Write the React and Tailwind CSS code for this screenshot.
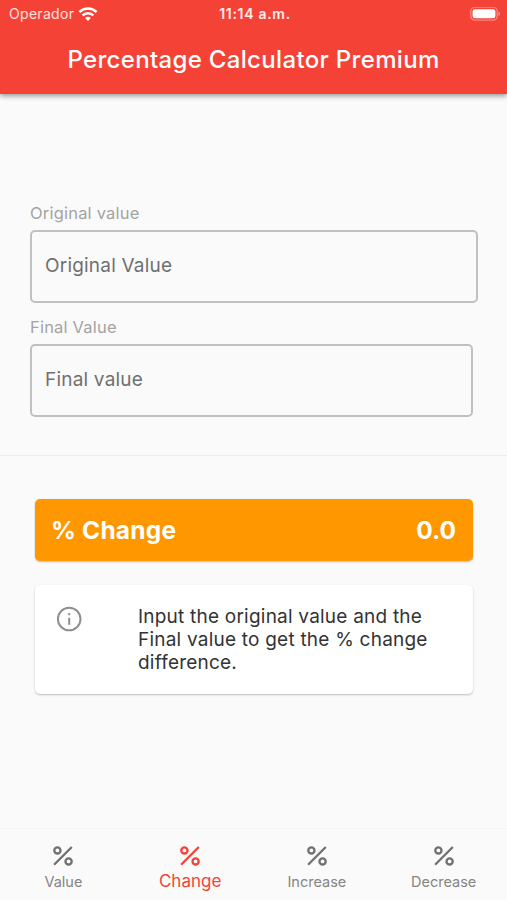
import { useState } from 'react'

const tabs = ['Value', 'Change', 'Increase', 'Decrease']

function WifiIcon() {
  return (
    <svg width="20" height="15" viewBox="0 0 20 15" fill="none" stroke="#fff" strokeWidth="2.6">
      <path d="M1.4 5a12.4 12.4 0 0 1 17.2 0" />
      <path d="M4.6 8.4a7.8 7.8 0 0 1 10.8 0" />
      <path d="M10 14 7.2 11a4.1 4.1 0 0 1 5.6 0z" fill="#fff" stroke="none" />
    </svg>
  )
}

function BatteryIcon() {
  return (
    <svg width="31" height="15" viewBox="0 0 31 15">
      <rect x="0.8" y="0.3" width="26.4" height="12.8" rx="4" fill="none" stroke="#fff" strokeOpacity="0.35" strokeWidth="1.4" />
      <rect x="2.6" y="2.2" width="22.8" height="9" rx="2.3" fill="#fff" />
      <path d="M28.4 4.5v4.4c1.2-.5 1.6-1.3 1.6-2.2s-.4-1.7-1.6-2.2z" fill="#fff" fillOpacity="0.4" />
    </svg>
  )
}

function PercentIcon() {
  return (
    <svg width="22" height="22" viewBox="0 0 22 22" fill="none" stroke="currentColor" strokeWidth="2.3">
      <circle cx="5.4" cy="5.4" r="3.1" />
      <circle cx="16.6" cy="16.4" r="3.1" />
      <path d="M2.1 19.7 19.8 2" />
    </svg>
  )
}

function InfoIcon() {
  return (
    <svg width="26" height="26" viewBox="0 0 26 26" fill="none" stroke="#8f8f8f" strokeWidth="2">
      <circle cx="13.2" cy="13" r="11.3" />
      <path d="M13.2 11.8v7M13.2 7v2.3" />
    </svg>
  )
}

function Field({ label, placeholder, inputClass }) {
  const [value, setValue] = useState('')

  return (
    <label className="block">
      <span className="block h-[18px] text-[16.5px] leading-[18px] tracking-[0.2px] text-[#a3a3a3]">{label}</span>
      <input
        className={`mt-2 block h-[73px] rounded-[5px] border-2 border-[#c0c0c0] bg-transparent px-[13px] pb-[3px] text-[19px] tracking-[0.2px] text-[#707070] placeholder:text-[#707070] focus:outline-none ${inputClass}`}
        type="text"
        placeholder={placeholder}
        value={value}
        onChange={(e) => setValue(e.target.value)}
      />
    </label>
  )
}

export default function App() {
  const [active, setActive] = useState('Change')

  return (
    <div className="flex h-[900px] w-full flex-col overflow-hidden bg-[#fafafa] font-['Inter',sans-serif]">
      <header className="h-[94px] shrink-0 bg-[#f44336] text-white shadow-[0_2px_5px_rgba(0,0,0,0.4)]">
        <div className="grid h-7 grid-cols-3 items-center pl-[9px] pr-1.5 text-sm leading-4">
          <div className="flex items-center gap-1 text-white/85">
            <span className="tracking-[0.3px]">Operador</span>
            <WifiIcon />
          </div>
          <div className="text-center font-semibold tracking-[0.7px] text-white/90">11:14 a.m.</div>
          <div className="flex justify-end">
            <BatteryIcon />
          </div>
        </div>
        <h1 className="mt-[17px] text-center text-2xl leading-[30px] font-medium tracking-[0.33px]">Percentage Calculator Premium</h1>
      </header>

      <main className="flex-1">
        <form className="flex h-[362px] flex-col gap-[15px] border-b border-[#eeeeee] pt-[110px] pl-[30px]">
          <Field label="Original value" placeholder="Original Value" inputClass="w-[448px]" />
          <Field label="Final Value" placeholder="Final value" inputClass="w-[443px]" />
        </form>

        <div className="mt-[43px] ml-[35px] flex h-[62px] w-[438px] items-center justify-between rounded-[5px] bg-[#ff9800] pr-[17px] pl-4 text-[24.5px] font-bold text-white shadow-[0_1px_2px_rgba(0,0,0,0.25)]">
          <span className="tracking-[0.2px]">% Change</span>
          <span>0.0</span>
        </div>

        <div className="mt-6 ml-[35px] flex h-[109px] w-[438px] rounded-[5px] bg-white pl-[21px] pt-5 shadow-[0_1px_2px_rgba(0,0,0,0.25)]">
          <div className="w-[82px] shrink-0 pt-px">
            <InfoIcon />
          </div>
          <p className="text-[19px] leading-[23px] tracking-[0.22px] text-[#333333]">
            Input the original value and the<br />
            Final value to get the % change<br />
            difference.
          </p>
        </div>
      </main>

      <nav className="grid h-[72px] shrink-0 grid-cols-4 border-t border-[#f5f5f5]">
        {tabs.map((tab) => (
          <button
            key={tab}
            type="button"
            onClick={() => setActive(tab)}
            className={`flex flex-col items-center pt-4 ${active === tab ? 'text-[#f44336]' : 'text-[#707070]'}`}
          >
            <PercentIcon />
            {active === tab
              ? <span className="mt-1 text-[17px] leading-5">{tab}</span>
              : <span className="mt-[5px] text-[14.5px] leading-5 text-[#858585]">{tab}</span>}
          </button>
        ))}
      </nav>
    </div>
  )
}
